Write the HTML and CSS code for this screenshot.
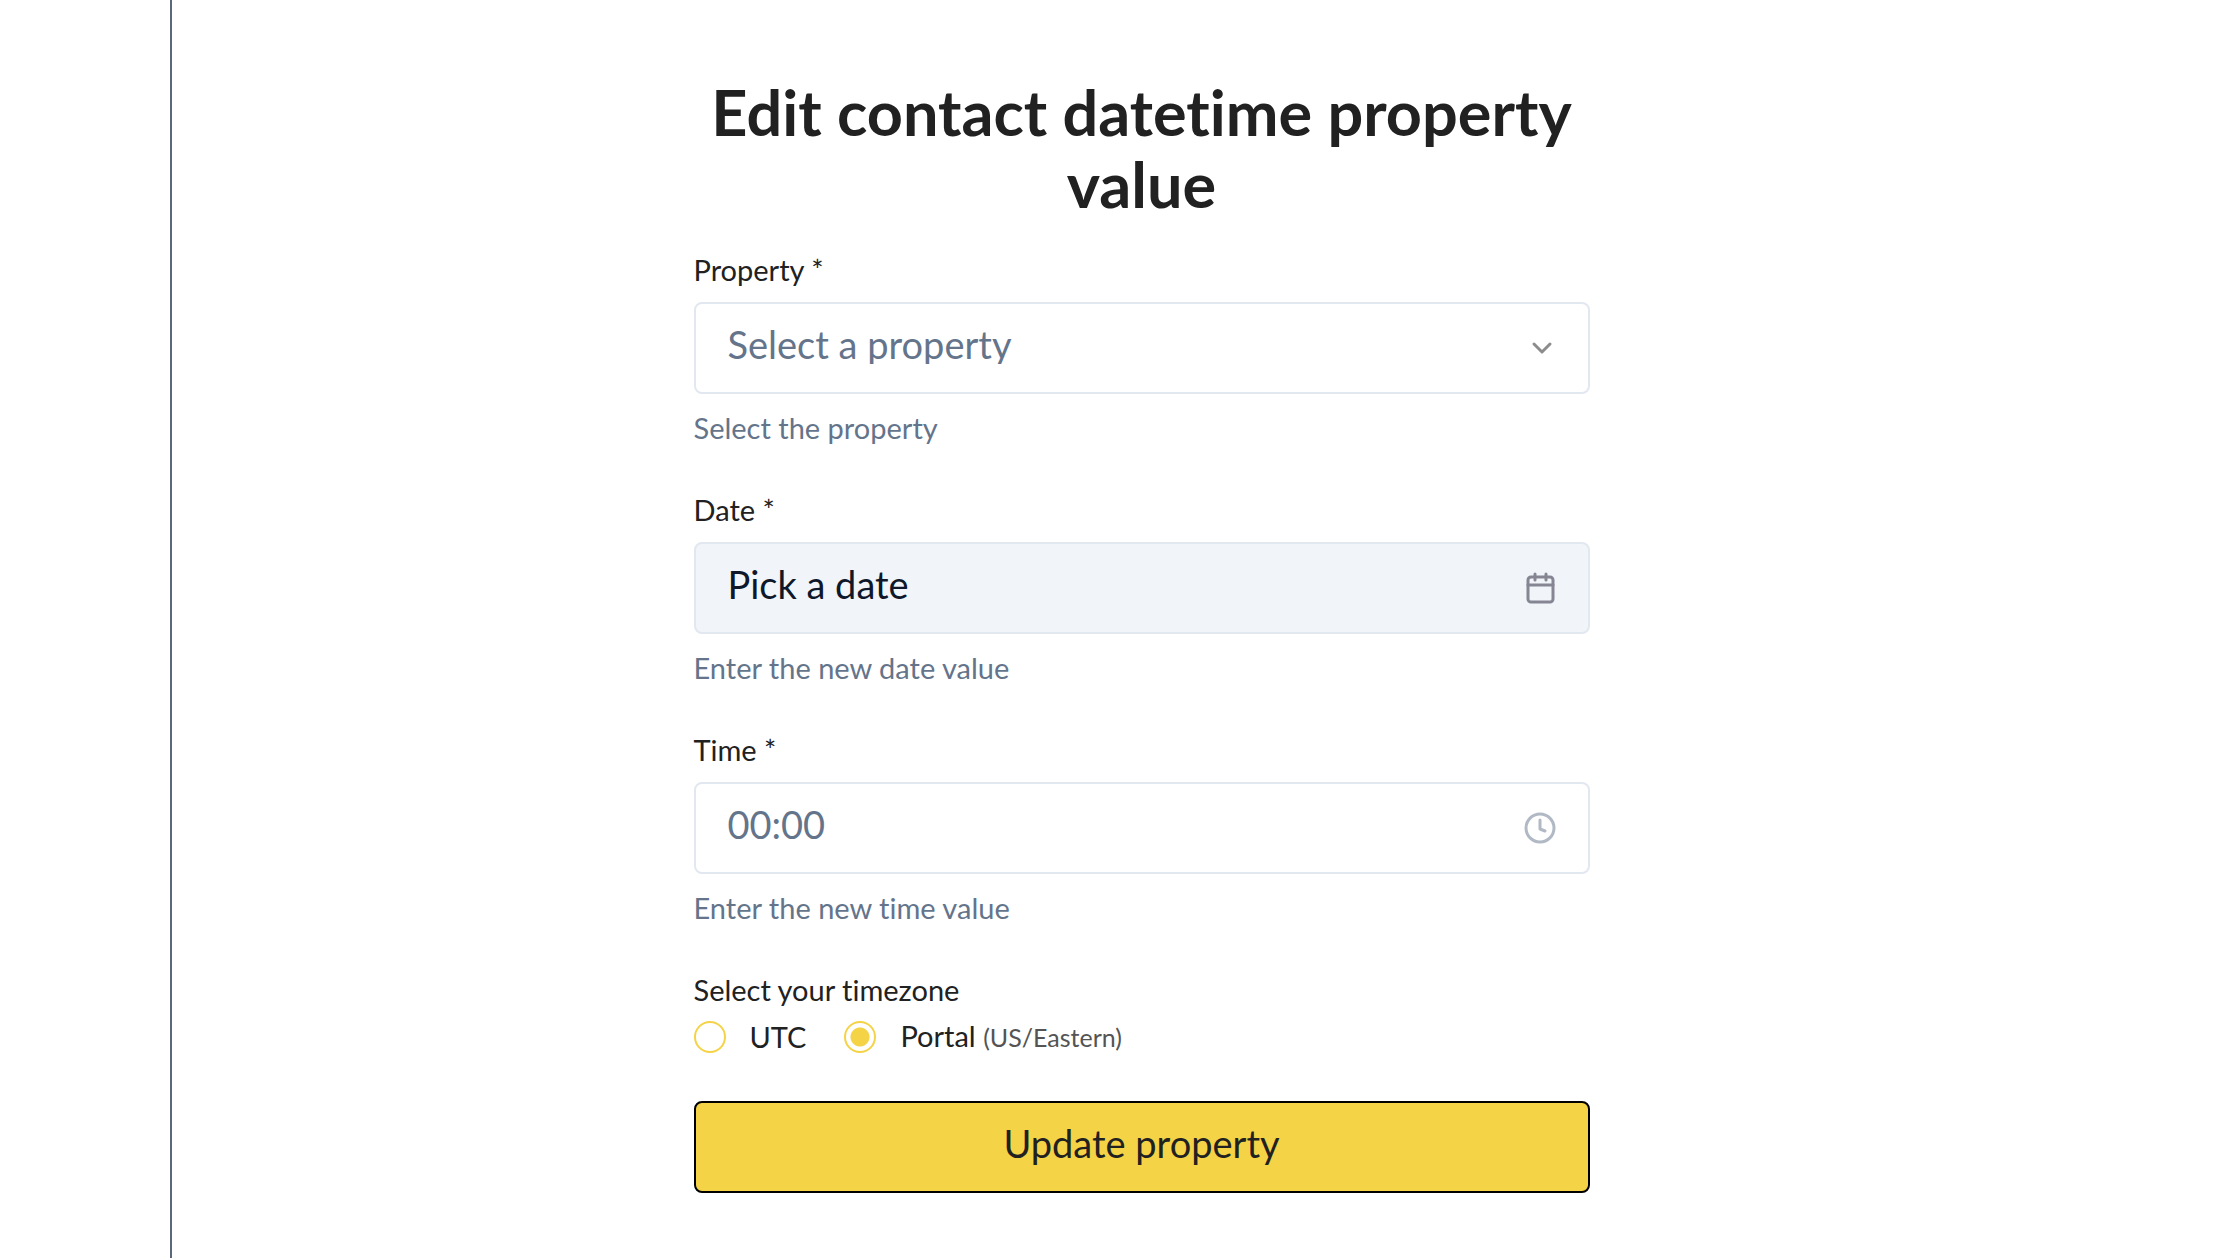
FILE: index.html
```html
<!DOCTYPE html>
<html lang="en">
<head>
<meta charset="utf-8">
<meta name="viewport" content="width=device-width, initial-scale=1">
<title>Edit contact datetime property value</title>
<link rel="stylesheet" href="styles.css">
</head>
<body>
<div class="layout">
  <aside class="sidebar"></aside>
  <main class="content">
    <form class="form">
      <h1 class="title">Edit contact datetime property value</h1>

      <div class="field">
        <label class="label" for="property">Property *</label>
        <div class="box">
          <select class="control control-muted" id="property">
            <option>Select a property</option>
          </select>
          <svg class="icon icon-gray" viewBox="0 0 32 32" aria-hidden="true"><path d="M10 12l8 8 8-8"/></svg>
        </div>
        <p class="help">Select the property</p>
      </div>

      <div class="field">
        <label class="label" for="date">Date *</label>
        <div class="box">
          <button class="control control-date" id="date" type="button">Pick a date</button>
          <svg class="icon icon-date" viewBox="0 0 32 32" aria-hidden="true"><rect x="4" y="5" width="25" height="25" rx="3"/><path d="M4 13h25M11 2v6M22 2v6"/></svg>
        </div>
        <p class="help">Enter the new date value</p>
      </div>

      <div class="field">
        <label class="label" for="time">Time *</label>
        <div class="box">
          <input class="control" id="time" type="text" placeholder="00:00">
          <svg class="icon icon-time" viewBox="0 0 32 32" aria-hidden="true"><circle cx="16" cy="16" r="14"/><path d="M16 8v9l5 2"/></svg>
        </div>
        <p class="help">Enter the new time value</p>
      </div>

      <fieldset class="timezone">
        <legend class="label-text">Select your timezone</legend>
        <div class="options">
          <label class="option"><input class="radio" type="radio" name="tz" value="utc"><span>UTC</span></label>
          <label class="option"><input class="radio" type="radio" name="tz" value="portal" checked><span>Portal <small class="zone">(US/Eastern)</small></span></label>
        </div>
      </fieldset>

      <button class="submit" type="submit">Update property</button>
    </form>
  </main>
</div>
</body>
</html>
```
FILE: styles.css
```css
* {
  box-sizing: border-box;
}

body {
  margin: 0;
  background: #fff;
  color: #212121;
  font-family: Lato, "Liberation Sans", sans-serif;
  font-size: 29px;
  font-variant-ligatures: none;
  line-height: 40px;
}

.layout {
  display: flex;
  min-height: 100vh;
}

.sidebar {
  flex: 0 0 172px;
  border-right: 2px solid #5b677a;
}

.content {
  flex: 1;
  padding: 76px 126px 64px 0;
}

.form {
  max-width: 896px;
  margin: 0 auto;
}

.title {
  margin: 0 0 30px;
  font-size: 63px;
  font-weight: 700;
  line-height: 72px;
  text-align: center;
}

.field {
  margin-bottom: 42px;
}

.label {
  display: block;
  margin-bottom: 12px;
}

.box {
  display: grid;
  align-items: center;
}

.box > * {
  grid-area: 1 / 1;
}

.control {
  width: 100%;
  height: 92px;
  padding: 0 96px 8px 32px;
  border: 2px solid #e2e8f0;
  border-radius: 8px;
  background: #fff;
  color: #0f172a;
  font: inherit;
  font-size: 38px;
  font-variant-ligatures: none;
  text-align: left;
  appearance: none;
}

.control::placeholder {
  color: #64748b;
  opacity: 1;
}

.control-muted {
  color: #64748b;
}

.control-date {
  background: #f1f5f9;
}

.icon {
  width: 32px;
  height: 32px;
  margin-right: 34px;
  justify-self: end;
  fill: none;
  stroke-linecap: round;
  stroke-linejoin: round;
  stroke-width: 3;
  pointer-events: none;
}

.icon-gray {
  stroke: #8c8c8c;
}

.icon-date {
  stroke: #858593;
}

.icon-time {
  stroke: #b1b9c5;
}

.help {
  margin: 0;
  padding-top: 14px;
  color: #64748b;
}

.timezone {
  min-width: 0;
  margin: 0 0 44px;
  padding: 0;
  border: 0;
}

.label-text {
  padding: 0;
}

.options {
  display: flex;
  gap: 38px;
  padding-top: 6px;
}

.option {
  display: flex;
  align-items: center;
  gap: 24px;
}

.radio {
  width: 32px;
  height: 32px;
  margin: 0;
  border: 2px solid #f5d346;
  border-radius: 50%;
  background: #fff;
  appearance: none;
}

.radio:checked {
  background: radial-gradient(circle, #f5d346 9px, #fff 10px);
}

.zone {
  color: #545454;
  font-size: 25px;
}

.submit {
  width: 100%;
  height: 92px;
  padding: 0 32px 8px;
  border: 2px solid #000;
  border-radius: 8px;
  background: #f5d346;
  color: #212121;
  font: inherit;
  font-size: 38px;
}
```
